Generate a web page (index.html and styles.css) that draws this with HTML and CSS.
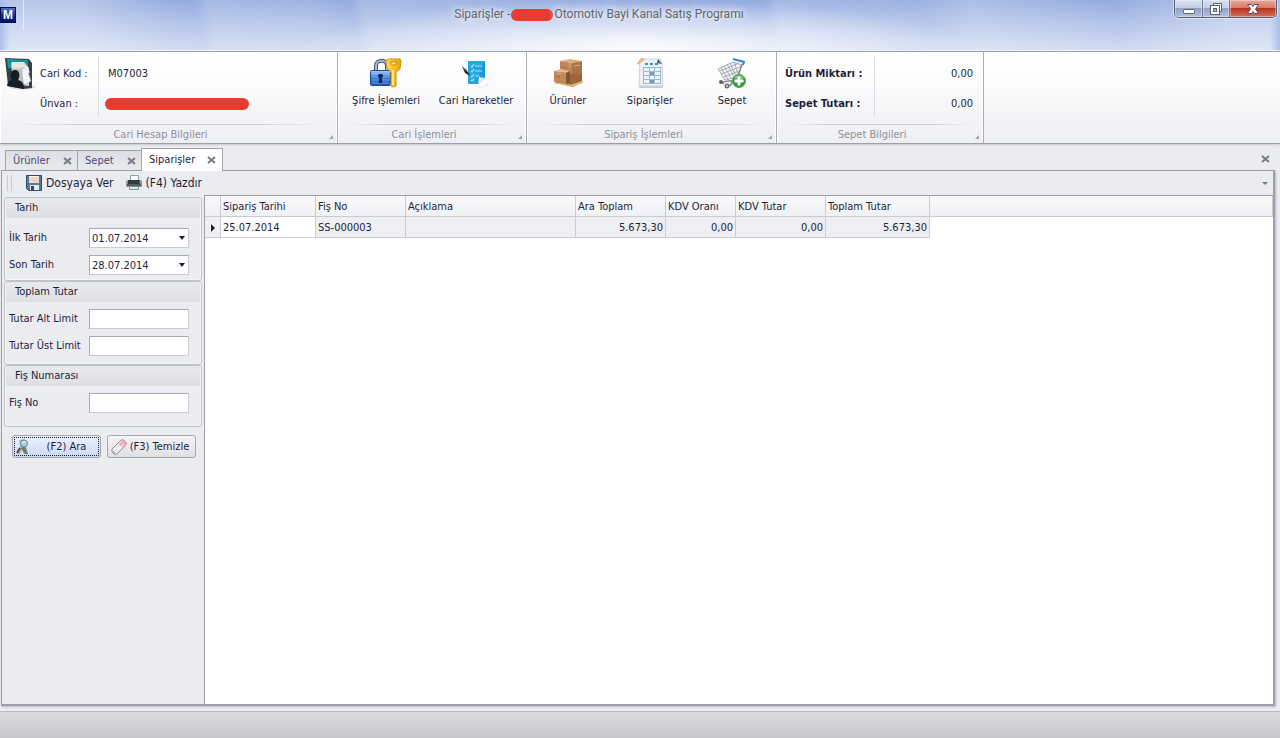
FILE: index.html
```html
<!DOCTYPE html>
<html lang="tr">
<head>
<meta charset="utf-8">
<meta name="viewport" content="width=device-width, initial-scale=1">
<title>Siparişler</title>
<link rel="stylesheet" href="styles.css">
</head>
<body>
<div class="app">
  <header class="titlebar">
    <div class="app-mark"><span class="app-icon">M</span></div>
    <h1 class="window-title">Siparişler -<span class="redacted redacted-short"></span>Otomotiv Bayi Kanal Satış Programı</h1>
    <div class="window-buttons">
      <button class="win-btn" type="button" aria-label="Simge durumuna küçült"><svg width="14" height="14" viewBox="0 0 14 14"><rect x="1.5" y="7.500" width="11" height="4" rx="1" fill="#fff" stroke="#5b6072"/></svg></button>
      <button class="win-btn" type="button" aria-label="Önceki boyut"><svg width="14" height="14" viewBox="0 0 14 14"><path d="M4.500 1.500h8v8h-2M4.500 3V1.500" fill="#fff" stroke="#5b6072"/><rect x="1.500" y="3.500" width="9" height="9" fill="#fff" stroke="#5b6072"/><rect x="4.500" y="6.500" width="3" height="3" fill="#a9b9d8" stroke="#5b6072"/></svg></button>
      <button class="win-btn win-close" type="button" aria-label="Kapat"><svg width="14" height="14" viewBox="0 0 14 14"><path d="M1.500 2.500h4L7 4.500l1.500-2h4L9.500 7l3 4.500h-4L7 9.500l-1.500 2h-4l3-4.500z" fill="#fff" stroke="#5d4a58"/></svg></button>
    </div>
  </header>

  <section class="ribbon">
    <div class="group group-account">
      <div class="group-body account">
        <svg class="account-icon" width="32" height="34" viewBox="0 0 32 34"><ellipse cx="18" cy="30" rx="13" ry="2.500" fill="#d9d9db"/><path d="M1 1l24 1 3 4v25l-9 1-15-3z" fill="#35424a"/><path d="M3 2l21 1v10L4 11z" fill="#1993a5"/><path d="M7 6l13-1 5 6v18l-16-2z" fill="#d9dcda"/><path d="M8 5h12v5H8z" fill="#eee9d6"/><path d="M18 11l5 1 4 12-6 4-4-5z" fill="#f5f6f7" stroke="#a9adb2" stroke-width=".7"/><path d="M8 12h10l2 16-10-2z" fill="#b9bfc6"/><path d="M20 9l4 1 2 6-5-2z" fill="#eef0f1"/><path d="M3 29c1-5 3-5 5-6-3-5-1-10 3-10s6 5 3 10c4 1 6 3 6 9z" fill="#171d23"/></svg>
        <dl class="facts">
          <dt>Cari Kod :</dt><dd>M07003</dd>
          <dt>Ünvan :</dt><dd><span class="redacted redacted-long"></span></dd>
        </dl>
      </div>
      <h2 class="group-title">Cari Hesap Bilgileri</h2>
    </div>

    <div class="group group-password">
      <div class="group-body">
        <button class="tool" type="button"><svg width="34" height="34" viewBox="0 0 34 34"><defs><linearGradient id="lock" x2="0" y2="1"><stop stop-color="#a6cdf5"/><stop offset=".5" stop-color="#3979ce"/><stop offset="1" stop-color="#1d55b4"/></linearGradient><linearGradient id="key" x2="1" y2="0"><stop stop-color="#ffe14c"/><stop offset="1" stop-color="#e9a00a"/></linearGradient></defs><path d="M7 15V9c0-7 11-7 11 0v6" fill="none" stroke="#42536f" stroke-width="4"/><path d="M7 15V9c0-7 11-7 11 0v6" fill="none" stroke="#a9bcd8" stroke-width="2"/><rect x="1.500" y="13.500" width="20" height="15" rx="1" fill="url(#lock)" stroke="#1d4d9d"/><path d="M3 17h17M3 20h17M3 23h17M3 26h17" stroke="#8cb9ed" stroke-width=".7"/><path d="M11.500 17a2 2 0 0 0-1 4l-1 5h4l-1-5a2 2 0 0 0-1-4z" fill="#0d2456"/><path d="M17 4l2-2h12l1 2-1 8-4 3v14l-3 1-2-1V15l-4-4z" fill="url(#key)" stroke="#cf920c"/><path d="M24 13v15" stroke="#fff29b" stroke-width="1.500"/><path d="M21 5h7l-2 3h-3z" fill="#fff4b2" stroke="#c98909"/></svg><span>Şifre İşlemleri</span></button>
        <button class="tool" type="button"><svg width="34" height="34" viewBox="0 0 34 34"><path d="M9 28l15 2 6-5-1 4-8 2z" fill="#e9eaec"/><path d="M9 4h17v17l-7 6H9z" fill="#27a7df"/><path d="M26 4v16l-7 7h-1l1-7z" fill="#1998d2"/><path d="M19 27l1-7 6 1z" fill="#dcebf2"/><path d="M12 9l1 1 2-3m1 2h7M12 14l1 1 2-3m1 2h7M12 19l1 1 2-3m1 2h5M12 23l1 1 2-2" fill="none" stroke="#a8def4" stroke-width="1.200"/><path d="M3 9l5 4 3 6-5-3z" fill="#23282b"/><path d="M4 10l5 5" stroke="#a7abad"/></svg><span>Cari Hareketler</span></button>
      </div>
      <h2 class="group-title">Cari İşlemleri</h2>
    </div>

    <div class="group group-orders">
      <div class="group-body spread">
        <button class="tool" type="button"><svg width="34" height="34" viewBox="0 0 34 34"><path d="M4 25l11-4 17 4-10 5-18-4z" fill="#a67a42"/><path d="M4 25l16 3 12-4v2l-12 4-16-4z" fill="#e0bf82"/><path d="M9 4l10-2 12 2-10 2z" fill="#d9ad7c"/><path d="M9 4l12 2v12L9 16z" fill="#bd8654"/><path d="M21 6l10-2v12l-10 2z" fill="#a97448"/><path d="M19 17l12-1v8l-12 3z" fill="#9b653c"/><path d="M3 14l7-2 9 2-4 2z" fill="#e0b788"/><path d="M3 14l12 2v11L3 25z" fill="#c08855"/><path d="M15 16l4-2v12l-4 1z" fill="#835431"/><path d="M14 3l5 2v5M6 16l5 1M23 9l6-1" fill="none" stroke="#dcb28c"/><path d="M11 10l4 1M5 19l4 1M24 19l5-1" stroke="#b56a4c" stroke-width="1.500"/></svg><span>Ürünler</span></button>
        <button class="tool" type="button"><svg width="34" height="34" viewBox="0 0 34 34"><path d="M6 29l23-1 1 3H6z" fill="#c8ccd1"/><path d="M7 2h20l2 4 1 23H6z" fill="#edf1f5" stroke="#ced5db"/><path d="M25 2l4 5-5-1z" fill="#4c555c"/><path d="M4 6l5-5 3 1-7 6z" fill="#e8b775"/><path d="M12 7h3m2 0h3m2 0h3" stroke="#1fa1c7" stroke-width="2"/><path d="M10 10h18v17H10z" fill="#9fb7cf"/><path d="M11 11h5v3h-5zm6 0h4v3h-4zm5 0h5v3h-5zM11 15h5v3h-5zm6 0h4v3h-4zm5 0h5v3h-5zM11 19h5v3h-5zm6 0h4v3h-4zm5 0h5v3h-5zM11 23h5v3h-5zm6 0h4v3h-4zm5 0h5v3h-5z" fill="#edf4fa"/><path d="M17 15h4v3h-4zm0 8h4v3h-4z" fill="#7899ba"/></svg><span>Siparişler</span></button>
        <button class="tool" type="button"><svg width="34" height="34" viewBox="0 0 34 34"><path d="M18 2l11 3-1 3" fill="none" stroke="#3b84d1" stroke-width="2"/><path d="M3 12L18 5l9 3-5 12-12 3z" fill="#f0f1f2" stroke="#a7abb0"/><path d="M6 11l7 11M9 9l7 12M12 7l7 13M15 6l6 14M19 5l4 12M5 14l19-8M6 17l19-7M9 20l15-6" fill="none" stroke="#9ba0a6" stroke-width=".8"/><path d="M27 7l-5 16-15 2M7 25l2 2m9-3l-3 5" fill="none" stroke="#858a8f" stroke-width="1.500"/><circle cx="6" cy="25" r="2" fill="#5e6368"/><circle cx="12" cy="29" r="2.500" fill="#686d72"/><circle cx="12" cy="29" r="1" fill="#d8d8d8"/><circle cx="24" cy="24" r="6.500" fill="#329535" stroke="#56a75a"/><path d="M19 21a6 6 0 0 1 10 0 10 10 0 0 1-10 0z" fill="#83c680"/><path d="M24 19.500v9M19.500 24h9" stroke="#fff" stroke-width="3"/></svg><span>Sepet</span></button>
      </div>
      <h2 class="group-title">Sipariş İşlemleri</h2>
    </div>

    <div class="group group-cart">
      <div class="group-body">
        <dl class="facts cart-facts">
          <dt>Ürün Miktarı :</dt><dd>0,00</dd>
          <dt>Sepet Tutarı :</dt><dd>0,00</dd>
        </dl>
      </div>
      <h2 class="group-title">Sepet Bilgileri</h2>
    </div>
  </section>

  <main class="workspace">
    <nav class="tabs" aria-label="Açık sayfalar">
      <div class="tab"><a href="#urunler">Ürünler</a><button class="close" type="button" aria-label="Ürünler sekmesini kapat"><svg width="9" height="8" viewBox="0 0 9 8"><path d="M1 1l7 6M8 1L1 7"/></svg></button></div>
      <div class="tab"><a href="#sepet">Sepet</a><button class="close" type="button" aria-label="Sepet sekmesini kapat"><svg width="9" height="8" viewBox="0 0 9 8"><path d="M1 1l7 6M8 1L1 7"/></svg></button></div>
      <div class="tab tab-active"><a href="#siparisler" aria-current="page">Siparişler</a><button class="close" type="button" aria-label="Siparişler sekmesini kapat"><svg width="9" height="8" viewBox="0 0 9 8"><path d="M1 1l7 6M8 1L1 7"/></svg></button></div>
      <button class="close close-all" type="button" aria-label="Sayfayı kapat"><svg width="9" height="8" viewBox="0 0 9 8"><path d="M1 1l7 6M8 1L1 7"/></svg></button>
    </nav>

    <div class="document" id="siparisler">
      <div class="toolbar">
        <span class="grip"></span>
        <button class="bar-btn" type="button"><svg width="16" height="16" viewBox="0 0 16 16"><path d="M.5.5h15v15h-13l-2-2z" fill="#567a9b" stroke="#314e68"/><path d="M3 1h10v7H3z" fill="#fff0eb"/><path d="M3 3h10M3 5h10M3 7h10" stroke="#eab4a6"/><path d="M4 10h9v5H4z" fill="#e7eaed"/><path d="M5 11h3v4H5z" fill="#34495e"/></svg><span>Dosyaya Ver</span></button>
        <button class="bar-btn" type="button"><svg width="16" height="16" viewBox="0 0 16 16"><path d="M4.500.5h8v6h-8z" fill="#f5fafc" stroke="#8ea0a8"/><path d="M0 6l2-1h12l2 1v6H0z" fill="#91969b"/><path d="M2 5h12v4H2z" fill="#33393d"/><path d="M1 9h14v2H1z" fill="#555b60"/><path d="M3.500 11.500h9v3h-9z" fill="#d3ecf4" stroke="#7e939b"/><path d="M13 7h1" stroke="#8ce06d"/></svg><span>(F4) Yazdır</span></button>
        <button class="overflow" type="button" aria-label="Araç çubuğu seçenekleri"><i class="arrow"></i></button>
      </div>

      <div class="content">
        <form class="filters">
          <fieldset class="box box-dates">
            <legend>Tarih</legend>
            <div class="field"><label for="d1">İlk Tarih</label><div class="date"><input id="d1" type="text" value="01.07.2014"><button type="button" aria-label="İlk tarihi seç"><i class="arrow"></i></button></div></div>
            <div class="field"><label for="d2">Son Tarih</label><div class="date"><input id="d2" type="text" value="28.07.2014"><button type="button" aria-label="Son tarihi seç"><i class="arrow"></i></button></div></div>
          </fieldset>
          <fieldset class="box">
            <legend>Toplam Tutar</legend>
            <div class="field"><label for="min">Tutar Alt Limit</label><input id="min" type="text"></div>
            <div class="field"><label for="max">Tutar Üst Limit</label><input id="max" type="text"></div>
          </fieldset>
          <fieldset class="box box-last">
            <legend>Fiş Numarası</legend>
            <div class="field"><label for="no">Fiş No</label><input id="no" type="text"></div>
          </fieldset>
          <div class="actions">
            <button class="action action-primary" type="submit"><svg width="16" height="16" viewBox="0 0 16 16"><path d="M3 1l6-1v5l3 10H8l-2-4-2 4H1L4 7z" fill="#b5b8b2"/><path d="M5 9l4-2 3 8H9z" fill="#74776f"/><path d="M4 9l-3 5" stroke="#594631" stroke-width="2"/><circle cx="8" cy="4.500" r="3.500" fill="#9ed1e8" stroke="#708590"/><path d="M6 4q2-2 4-1" stroke="#eefaff" fill="none"/></svg><span>(F2) Ara</span></button>
            <button class="action" type="button"><svg width="16" height="16" viewBox="0 0 16 16"><path d="M1 10L10 1q2-1 4 1t1 4l-9 9q-2 1-4-1t-1-4z" fill="#e9e6e8" stroke="#938c91"/><path d="M7 4l3-3q2-1 4 1t1 4l-3 3z" fill="#efa7bd"/><path d="M2 11l9-9M4 13l9-8" stroke="#fff" opacity=".8"/><path d="M2 12l2 2" stroke="#aaa"/></svg><span>(F3) Temizle</span></button>
          </div>
        </form>

        <div class="grid">
          <table>
            <colgroup><col class="c-mark"><col class="c-date"><col class="c-mid"><col class="c-note"><col class="c-mid"><col class="c-rate"><col class="c-mid"><col class="c-total"><col></colgroup>
            <thead><tr><th></th><th>Sipariş Tarihi</th><th>Fiş No</th><th>Açıklama</th><th>Ara Toplam</th><th>KDV Oranı</th><th>KDV Tutar</th><th>Toplam Tutar</th><th></th></tr></thead>
            <tbody><tr><td class="mark"><i></i></td><td class="focused">25.07.2014</td><td>SS-000003</td><td></td><td class="num">5.673,30</td><td class="num">0,00</td><td class="num">0,00</td><td class="num">5.673,30</td><td class="rest"></td></tr></tbody>
          </table>
        </div>
      </div>
    </div>
  </main>
  <footer class="statusbar"></footer>
</div>
</body>
</html>
```
FILE: styles.css
```css
* { box-sizing: border-box; }

body {
  margin: 0;
  color: #1e1e3c;
  font: 11px/14px "DejaVu Sans Condensed", "DejaVu Sans", sans-serif;
  background: #ebecef;
}

button, input { font: inherit; color: inherit; }
button { padding: 0; border: 0; background: none; }
svg { display: block; flex: none; }
h1, h2, dl, dd { margin: 0; font-weight: normal; }
a { color: inherit; text-decoration: none; }

.app { display: flex; flex-direction: column; min-height: 100vh; }

/* Title bar */
.titlebar {
  display: grid;
  grid-template-columns: auto 1fr auto;
  align-items: start;
  height: 52px;
  border-bottom: 1px solid #9c9ea8;
  box-shadow: inset 0 -1px #eef1f8;
  background:
    linear-gradient(90deg, #a9bfe8 0, #a9bfe800 10px, #a9bfe800 calc(100% - 10px), #a9bfe8 100%),
    radial-gradient(ellipse 340px 50px at 50% 100%, #fffffff0, #ffffff00),
    linear-gradient(75deg, #ffffff50 0, #ffffff50 7%, #ffffff10 13%, #ffffff00 16%, #ffffff28 17%, #ffffff18 25%, #ffffff00 28%, #ffffff28 29%, #ffffff00 60%, #ffffff28 61%, #ffffff10 72%, #ffffff38 76%, #ffffff00 87%, #ffffff50 96%),
    linear-gradient(#94abdf, #b2c3ea 45%, #d3def2);
}
.app-mark { display: flex; height: 30px; align-items: center; width: 24px; border-right: 1px solid #ffffff90; }
.app-icon {
  width: 16px;
  height: 16px;
  border: 1px solid #061152;
  background: linear-gradient(#4b75c2, #102b8b 55%, #07106b);
  color: #fff;
  font: bold 12px/14px "Liberation Sans", sans-serif;
  text-align: center;
}
.window-title {
  display: flex;
  align-items: center;
  justify-content: center;
  padding-top: 6px;
  color: #63656c;
  font: 12px/17px Roboto, sans-serif;
  text-shadow: 0 0 6px #fff, 0 0 10px #fff;
}
.redacted { display: inline-block; border-radius: 6px; background: #e53b30; }
.redacted-short { width: 42px; height: 12px; margin: 0 1px; }
.redacted-long { width: 144px; height: 12px; margin-left: -3px; vertical-align: middle; }
.window-buttons {
  display: flex;
  margin-right: 3px;
  overflow: hidden;
  border: 1px solid #555e74;
  border-top: 0;
  border-radius: 0 0 5px 5px;
  box-shadow: 0 0 0 1px #ffffff80;
}
.win-btn {
  display: grid;
  place-items: center;
  width: 28px;
  height: 17px;
  border-right: 1px solid #6c7891;
  background: linear-gradient(#d4dff0 0, #c3cfe5 45%, #93a2c2 50%, #b4c2dd);
  box-shadow: inset 0 0 0 1px #ffffff60;
}
.win-btn + .win-btn { width: 27px; }
.win-btn + .win-close { width: 46px; border: 0; background: linear-gradient(#e9a99d 0, #d67c6b 45%, #b83420 50%, #d4705b); }

/* Ribbon */
.ribbon {
  display: flex;
  height: 92px;
  border-bottom: 1px solid #9c9ea8;
  background: linear-gradient(#fff 0, #fdfdfe 25%, #eeeff3);
  box-shadow: 0 1px 2px #c8c9ce;
}
.group {
  position: relative;
  display: flex;
  flex-direction: column;
  flex: none;
  border-right: 1px solid #a9abb5;
  box-shadow: inset -1px 0 #fff, inset 1px 0 #fff;
}
.group-account { width: 338px; }
.group-password { width: 189px; }
.group-orders { width: 250px; }
.group-cart { width: 207px; }
.group::after {
  content: "";
  position: absolute;
  right: 4px;
  bottom: 4px;
  border: 2px solid;
  border-color: transparent #a2a3aa #a2a3aa transparent;
}
.group-body { display: flex; flex: 1; gap: 18px; padding: 5px 8px 0 12px; }
.spread { gap: 16px; padding-left: 8px; }
.account { gap: 4px; padding: 5px 0 0 4px; }
.group-title {
  margin: 0 12px;
  padding: 3px 16px 1px 0;
  border-top: 1px solid;
  border-image: linear-gradient(90deg, #d0d2d800, #d0d2d8 20%, #d0d2d8 80%, #d0d2d800) 1;
  color: #8e8f9d;
  font-size: 11px;
  line-height: 14px;
  text-align: center;
}
.facts { display: grid; grid-template-columns: 58px 1fr; grid-template-rows: 30px 30px; flex: 1; }
.facts dt { padding-top: 10px; }
.facts dd { padding: 10px 0 0 9px; border-left: 1px solid #dcdde3; }
.cart-facts { grid-template-columns: 89px 1fr; }
.cart-facts dt { font-weight: bold; }
.cart-facts dd { padding-right: 2px; text-align: right; }
.group-cart .group-body { padding-left: 8px; }
.tool { display: flex; flex-direction: column; align-items: center; width: 72px; gap: 3px; white-space: nowrap; }
.spread .tool { width: 66px; }

/* Document tabs */
.workspace { display: flex; flex: 1; flex-direction: column; padding: 4px 5px 5px 1px; }
.tabs { display: flex; align-items: flex-end; height: 22px; padding: 0 5px 0 4px; }
.tab {
  display: flex;
  align-items: center;
  justify-content: space-between;
  width: 72px;
  height: 20px;
  padding: 0 5px 0 7px;
  border: 1px solid #a1a3af;
  border-right-width: 0;
  border-bottom: 0;
  background: linear-gradient(#dddee3, #e9eaee);
  color: #4a4870;
}
.tab + .tab { width: 64px; }
.tabs .tab-active {
  z-index: 1;
  width: 82px;
  height: 23px;
  margin-bottom: -1px;
  padding-right: 6px;
  border-right-width: 1px;
  background: #fff;
  color: #1e1e3c;
}
.close { display: grid; place-items: center; }
.close path { fill: none; stroke: #777986; stroke-width: 2; }
.close-all { height: 22px; margin-left: auto; }
.document {
  display: flex;
  flex: 1;
  flex-direction: column;
  border: 1px solid #9d9eaa;
  border-right-width: 2px;
  border-bottom-width: 2px;
  box-shadow: 1px 1px 2px #b8b9c0;
}
.toolbar { display: flex; align-items: center; gap: 12px; height: 24px; padding: 0 5px; }
.grip { width: 5px; height: 16px; margin-right: 2px; border: solid #c9cad0; border-width: 0 1px; }
.bar-btn { display: flex; align-items: center; gap: 4px; font-size: 12px; }
.overflow { margin-left: auto; color: #777986; }
.arrow { display: block; border: 4px solid transparent; border-top-color: currentColor; border-bottom: 0; }
.overflow .arrow { border-width: 3px 3px 0; }

/* Filters */
.content { display: flex; flex: 1; }
.filters { flex: none; width: 202px; padding: 2px; }
.box {
  display: flex;
  flex-direction: column;
  gap: 7px;
  min-width: 0;
  margin: 0;
  padding: 0 12px 8px 4px;
  border: 1px solid #c1c3ca;
  border-radius: 3px;
  box-shadow: inset 0 0 0 1px #f4f5f7;
}
.box-dates { padding-bottom: 5px; }
.box-dates legend { margin-bottom: 3px; }
.box-last { padding-bottom: 13px; }
.box legend {
  float: left;
  width: calc(100% + 14px);
  height: 20px;
  margin-left: -3px;
  margin-right: -11px;
  padding: 3px 9px 0;
  background: linear-gradient(#e8e9ec, #dfe0e4);
}
.field { display: flex; align-items: center; gap: 4px; }
.field label { flex: 1; white-space: nowrap; }
.field input {
  width: 100px;
  height: 20px;
  padding: 0 2px;
  border: 1px solid #a7a9b5;
  border-right-color: #c9cad1;
  border-bottom-color: #c9cad1;
  border-radius: 0;
  background: #fff;
}
.date { position: relative; display: flex; }
.date button { position: absolute; inset: 0 4px 0 auto; }
.date .arrow { border-width: 4px 3px 0; }
.actions { display: flex; gap: 6px; padding: 8px 6px 0 8px; }
.action {
  display: flex;
  flex: 1 1 0;
  min-width: 0;
  align-items: center;
  height: 23px;
  padding: 0 3px;
  border: 1px solid #a3a5b0;
  border-radius: 3px;
  background: linear-gradient(#f4f4f6, #dfe0e5);
  white-space: nowrap;
}
.action span { flex: 1; text-align: center; }
.action-primary {
  background: linear-gradient(#edf2fd, #cad9f8);
  outline: 1px dotted #17171f;
  outline-offset: -3px;
}
.action-primary span { padding-left: 4px; }

/* Order list */
.grid { flex: 1; min-width: 0; border: 1px solid #9d9eaa; border-width: 1px 0 0 1px; background: #fff; }
.grid table { width: 100%; border-collapse: separate; border-spacing: 0; table-layout: fixed; }
.c-mark { width: 16px; }
.c-date { width: 95px; }
.c-mid { width: 90px; }
.c-note { width: 170px; }
.c-rate { width: 70px; }
.c-total { width: 104px; }
.grid th, .grid td {
  height: 21px;
  padding: 1px 2px 0;
  border: solid #cbccd3;
  border-width: 0 1px 1px 0;
  font-weight: normal;
  text-align: left;
  white-space: nowrap;
}
.grid th { background: linear-gradient(#f9f9fa, #f0f1f4); }
.grid td { background: #eeeff2; }
.grid .focused { background: #fff; }
.grid .num { text-align: right; }
.grid .rest { border: 0; background: #fff; }
.mark i { display: block; width: 0; margin-left: 4px; border: 4px solid transparent; border-left-color: #1e1e2c; border-right: 0; }

.statusbar { height: 27px; border-top: 1px solid #b9bac1; background: linear-gradient(#d9dade, #c7c8cd); }
```
